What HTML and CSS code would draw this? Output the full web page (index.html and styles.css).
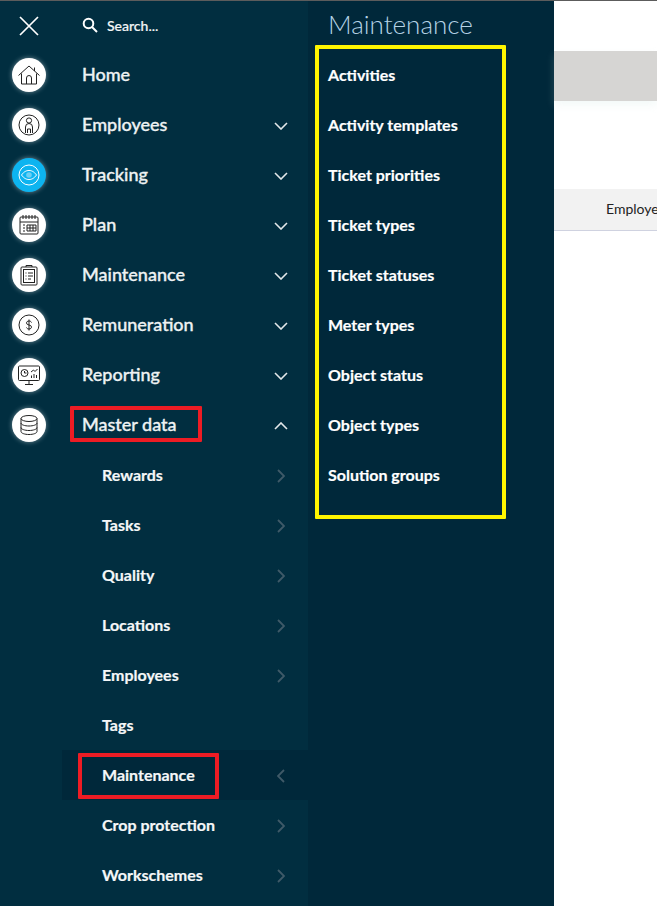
FILE: index.html
```html
<!DOCTYPE html>
<html lang="en">
<head>
<meta charset="utf-8">
<title>Maintenance</title>
<link rel="stylesheet" href="styles.css">
</head>
<body>
<div class="app">
  <nav class="sidebar">
    <div class="row top">
      <div class="rail"><svg class="close" viewBox="0 0 20 20"><path d="M1 1 19 19M19 1 1 19"/></svg></div>
      <div class="search"><svg class="mag" viewBox="0 0 16 16"><circle cx="6.500" cy="6.500" r="4.800"/><path d="M10 10l5 5"/></svg><span>Search...</span></div>
    </div>
    <div class="row">
      <div class="rail"><span class="disc"><svg viewBox="0 0 24 24"><path d="M1.500 12.500 12 3l10.500 9.500M4.500 10.500V21h15V10.500M9.500 21v-6a2.500 2.500 0 0 1 5 0v6M17.500 4.500v3.500"/></svg></span></div>
      <span class="label">Home</span>
    </div>
    <div class="row">
      <div class="rail"><span class="disc"><svg viewBox="0 0 24 24"><circle cx="12" cy="12" r="10"/><circle cx="12" cy="7.500" r="2.600"/><path d="M8.500 20v-6a3.500 3.500 0 0 1 7 0v6M10.500 20v-4h3v4"/></svg></span></div>
      <span class="label">Employees</span><svg class="chev" viewBox="0 0 14 8"><path d="M1 1l6 6 6-6"/></svg>
    </div>
    <div class="row">
      <div class="rail"><span class="disc on"><svg viewBox="0 0 24 24"><circle cx="12" cy="12" r="10"/><path d="M4.500 12C7 8.500 9.500 7.500 12 7.500s5 1 7.500 4.500c-2.500 3.500-5 4.500-7.500 4.500S7 15.500 4.500 12z"/><circle class="pupil" cx="12" cy="12" r="2.800"/></svg></span></div>
      <span class="label">Tracking</span><svg class="chev" viewBox="0 0 14 8"><path d="M1 1l6 6 6-6"/></svg>
    </div>
    <div class="row">
      <div class="rail"><span class="disc"><svg viewBox="0 0 24 24"><rect x="3" y="4" width="18" height="17" rx="1"/><path d="M3 9h18M6 2v4M9 2v4M12 2v4M15 2v4M18 2v4M10 12h9v6h-9zM10 15h9M13 12v6M16 12v6M6 12h2M6 15h2M6 18h2"/></svg></span></div>
      <span class="label">Plan</span><svg class="chev" viewBox="0 0 14 8"><path d="M1 1l6 6 6-6"/></svg>
    </div>
    <div class="row">
      <div class="rail"><span class="disc"><svg viewBox="0 0 24 24"><rect x="4" y="4" width="16" height="18" rx="1"/><rect x="6.500" y="6.500" width="11" height="13"/><path d="M9 4V2.500h6V4M8.500 10h1M11 10h5M8.500 13h1M11 13h5M8.500 16h1M11 16h3"/></svg></span></div>
      <span class="label">Maintenance</span><svg class="chev" viewBox="0 0 14 8"><path d="M1 1l6 6 6-6"/></svg>
    </div>
    <div class="row">
      <div class="rail"><span class="disc"><svg viewBox="0 0 24 24"><circle cx="12" cy="12" r="10"/><path d="M14.500 9.500c-.4-1-1.200-1.500-2.500-1.500-1.500 0-2.500.8-2.500 2 0 2.800 5 1.200 5 4 0 1.200-1 2-2.500 2-1.300 0-2.100-.5-2.500-1.500M12 6.500v11"/></svg></span></div>
      <span class="label">Remuneration</span><svg class="chev" viewBox="0 0 14 8"><path d="M1 1l6 6 6-6"/></svg>
    </div>
    <div class="row">
      <div class="rail"><span class="disc"><svg viewBox="0 0 24 24"><rect x="1.500" y="3" width="21" height="14.500" rx="1"/><path d="M12 17.500V21M8 21.500h8M14 9l2.500-2 1.500 1.500 2.500-2.500M14.500 15v-2.500M17 15v-4M19.500 15v-3"/><circle cx="7.500" cy="10" r="3.500"/><path d="M7.500 8v2h2"/></svg></span></div>
      <span class="label">Reporting</span><svg class="chev" viewBox="0 0 14 8"><path d="M1 1l6 6 6-6"/></svg>
    </div>
    <div class="row">
      <div class="rail"><span class="disc"><svg viewBox="0 0 24 24"><ellipse cx="12" cy="5.500" rx="8" ry="3"/><path d="M4 5.500v13c0 1.700 3.600 3 8 3s8-1.300 8-3v-13M4 10c0 1.700 3.600 3 8 3s8-1.300 8-3M4 14.500c0 1.700 3.600 3 8 3s8-1.300 8-3"/></svg></span></div>
      <span class="label marked">Master data</span><svg class="chev" viewBox="0 0 14 8"><path d="M1 7l6-6 6 6"/></svg>
    </div>
    <div class="sub"><span class="sublabel">Rewards</span><svg class="arrow" viewBox="0 0 8 14"><path d="M1 1l6 6-6 6"/></svg></div>
    <div class="sub"><span class="sublabel">Tasks</span><svg class="arrow" viewBox="0 0 8 14"><path d="M1 1l6 6-6 6"/></svg></div>
    <div class="sub"><span class="sublabel">Quality</span><svg class="arrow" viewBox="0 0 8 14"><path d="M1 1l6 6-6 6"/></svg></div>
    <div class="sub"><span class="sublabel">Locations</span><svg class="arrow" viewBox="0 0 8 14"><path d="M1 1l6 6-6 6"/></svg></div>
    <div class="sub"><span class="sublabel">Employees</span><svg class="arrow" viewBox="0 0 8 14"><path d="M1 1l6 6-6 6"/></svg></div>
    <div class="sub"><span class="sublabel">Tags</span></div>
    <div class="sub active"><span class="sublabel marked-sub">Maintenance</span><svg class="arrow" viewBox="0 0 8 14"><path d="M7 1 1 7l6 6"/></svg></div>
    <div class="sub"><span class="sublabel">Crop protection</span><svg class="arrow" viewBox="0 0 8 14"><path d="M1 1l6 6-6 6"/></svg></div>
    <div class="sub"><span class="sublabel">Workschemes</span><svg class="arrow" viewBox="0 0 8 14"><path d="M1 1l6 6-6 6"/></svg></div>
  </nav>
  <aside class="panel">
    <h1 class="title">Maintenance</h1>
    <ul class="links">
      <li>Activities</li>
      <li>Activity templates</li>
      <li>Ticket priorities</li>
      <li>Ticket types</li>
      <li>Ticket statuses</li>
      <li>Meter types</li>
      <li>Object status</li>
      <li>Object types</li>
      <li>Solution groups</li>
    </ul>
  </aside>
  <main class="content">
    <div class="band"></div>
    <div class="tabs"><span class="tab">Employees</span></div>
  </main>
</div>
</body>
</html>
```

FILE: styles.css
```css
*, *::before, *::after { box-sizing: border-box; }
html, body { margin: 0; height: 100%; overflow: hidden; background: #fff; }
body { font-family: Lato, "Liberation Sans", sans-serif; border-top: 1px solid #5c5c5c; }
.app { display: flex; height: 905px; overflow: hidden; }

.sidebar { flex: 0 0 308px; background: #012e40; color: #fff; }
.row { display: flex; align-items: center; height: 50px; padding-right: 20px; }
.top { height: 49px; }
.rail { flex: 0 0 82px; display: flex; justify-content: flex-start; padding-left: 12px; }
.close { width: 20px; height: 20px; margin-left: 7px; fill: none; stroke: #fff; stroke-width: 1.700; }
.search { display: flex; align-items: center; gap: 9px; margin-top: -1px; font-size: 14px; font-weight: 500; color: #f2f5f6; -webkit-text-stroke: .2px #f2f5f6; }
.mag { width: 16px; height: 16px; fill: none; stroke: #fff; stroke-width: 2; }
.disc { display: flex; align-items: center; justify-content: center; width: 34px; height: 34px; border-radius: 50%; background: #fff; box-shadow: 0 0 5px rgba(255,255,255,.45); }
.disc svg { width: 24px; height: 24px; fill: none; stroke: #222; stroke-width: 1; }
.disc.on { background: #0db4f0; }
.disc.on svg { stroke: #fff; }
.disc.on .pupil { fill: #6fcff2; stroke: none; }
.label { flex: 1; margin-top: -2px; font-size: 18px; font-weight: 500; color: #eef2f3; -webkit-text-stroke: .35px #eef2f3; }
.chev { width: 14px; height: 8px; margin: 2px 0 0 0; fill: none; stroke: #e3e8ea; stroke-width: 1.600; }
.sub { display: flex; align-items: center; height: 50px; margin-left: 62px; padding: 0 23px 0 40px; }
.sublabel { flex: 1; margin-top: -2px; font-size: 16px; font-weight: 700; color: #f5f7f8; -webkit-text-stroke: .2px #f5f7f8; }
.arrow { width: 8px; height: 14px; margin-top: 2px; fill: none; stroke: #3f5a68; stroke-width: 1.800; }
.active { background: #00283a; }
.marked, .marked-sub { position: relative; }
.marked::after { content: ""; position: absolute; left: -12px; top: -7px; width: 132px; height: 36px; border: 4px solid #ed1c24; border-radius: 1px; }
.marked-sub::after { content: ""; position: absolute; left: -24px; top: -12px; width: 141px; height: 46px; border: 4px solid #ed1c24; border-radius: 1px; }

.panel { flex: 0 0 246px; background: #00283a; color: #fff; padding-left: 21px; }
.title { margin: 0 0 0 -1px; height: 44px; line-height: 46px; font-size: 26px; font-weight: 300; color: #b5d3e6; }
.links { list-style: none; margin: 0 0 0 -14px; padding: 1px 0 0 9px; width: 191px; height: 474px; border: 4px solid #fff600; border-radius: 1px; }
.links li { height: 50px; line-height: 49px; font-size: 16px; font-weight: 700; color: #fff; white-space: nowrap; -webkit-text-stroke: .2px #fff; }

.content { flex: 1; min-width: 0; }
.band { margin-top: 50px; height: 50px; background: #d6d5d3; box-shadow: 0 4px 8px rgba(190,220,215,.18); }
.tabs { margin-top: 88px; height: 42px; padding: 0 0 3px 52px; background: #f2f2f2; border-bottom: 1px solid #cfd2e0; display: flex; align-items: center; overflow: hidden; }
.tab { font-size: 14px; color: #222; white-space: nowrap; }
```
